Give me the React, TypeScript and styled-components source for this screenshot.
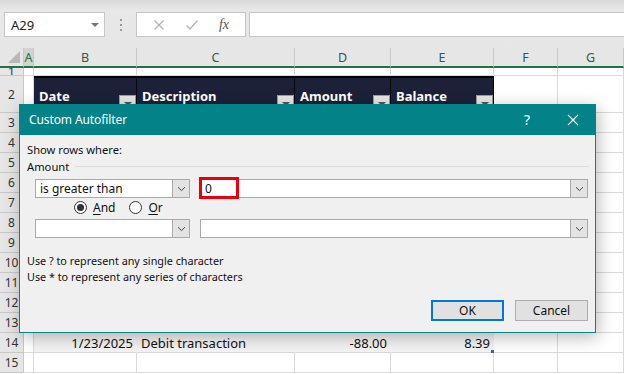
import styled, { createGlobalStyle } from "styled-components";

const GlobalStyle = createGlobalStyle`
  html, body {
    margin: 0;
    padding: 0;
    background: #ffffff;
    overflow: hidden;
  }
  * {
    box-sizing: border-box;
  }
`;

const UI_FONT = `"Noto Sans", "Open Sans", sans-serif`;
const CELL_FONT = `"Noto Sans", "Open Sans", sans-serif`;

const COLUMNS = [
  { key: "A", width: 10 },
  { key: "B", width: 103 },
  { key: "C", width: 158 },
  { key: "D", width: 96 },
  { key: "E", width: 103 },
  { key: "F", width: 64 },
  { key: "G", width: 66 },
];

const HEADERS = ["Date", "Description", "Amount", "Balance"];

const Page = styled.div`
  position: relative;
  width: 624px;
  height: 374px;
  overflow: hidden;
  font-family: ${UI_FONT};
`;

/* ---------- formula bar ---------- */

const FormulaBar = styled.div`
  height: 48px;
  display: flex;
  align-items: flex-start;
  padding: 12px 0 0 4px;
  background: linear-gradient(#d9d9d9 0px, #e8e8e8 10px, #e6e6e6 100%);
`;

const NameBox = styled.div`
  width: 101px;
  height: 25px;
  background: #fff;
  border: 1px solid #c6c6c6;
  display: flex;
  align-items: center;
  justify-content: space-between;
  padding: 0 5px 0 6px;
  font-size: 13px;
  color: #222;
`;

const Caret = styled.span`
  width: 0;
  height: 0;
  border-left: 4px solid transparent;
  border-right: 4px solid transparent;
  border-top: 4px solid #777;
`;

const Grip = styled.div`
  width: 31px;
  height: 25px;
  display: flex;
  flex-direction: column;
  align-items: center;
  justify-content: center;
  gap: 3px;
`;

const GripDot = styled.span`
  width: 2px;
  height: 2px;
  background: #9a9a9a;
`;

const FxBox = styled.div`
  width: 110px;
  height: 25px;
  background: #fff;
  border: 1px solid #c6c6c6;
  display: flex;
  align-items: center;
  justify-content: space-around;
  padding: 0 6px;
`;

const FxLabel = styled.span`
  font-family: "Liberation Serif", serif;
  font-style: italic;
  font-size: 14px;
  color: #555;
`;

const FormulaInput = styled.div`
  flex: 1;
  height: 25px;
  margin-left: 3px;
  background: #fff;
  border: 1px solid #c6c6c6;
  border-right: none;
`;

/* ---------- sheet grid ---------- */

const Sheet = styled.div`
  display: grid;
  grid-template-columns: 24px ${COLUMNS.map((c) => `${c.width}px`).join(" ")};
  grid-template-rows: 20px 8px 37px repeat(13, 20px);
  font-family: ${CELL_FONT};
`;

const Corner = styled.div`
  position: relative;
  background: #e6e6e6;
  border-right: 1px solid #c8c8c8;
  border-bottom: 2px solid #217346;
  &::after {
    content: "";
    position: absolute;
    right: 3px;
    bottom: 3px;
    width: 0;
    height: 0;
    border-left: 12px solid transparent;
    border-bottom: 12px solid #b8b8b8;
  }
`;

const ColHeader = styled.div<{ $active?: boolean }>`
  background: ${(p) => (p.$active ? "#d2d2d2" : "#e6e6e6")};
  border-right: 1px solid #c8c8c8;
  border-bottom: 2px solid #217346;
  display: flex;
  align-items: center;
  justify-content: center;
  font-size: 12.5px;
  color: ${(p) => (p.$active ? "#217346" : "#2e5a4e")};
  overflow: hidden;
`;

const RowHeader = styled.div<{ $tiny?: boolean }>`
  background: #e6e6e6;
  border-right: 1px solid #c8c8c8;
  border-bottom: 1px solid #c8c8c8;
  display: flex;
  align-items: ${(p) => (p.$tiny ? "flex-end" : "center")};
  justify-content: center;
  font-size: 12px;
  line-height: ${(p) => (p.$tiny ? "7px" : "normal")};
  color: #333;
  overflow: hidden;
`;

const Cell = styled.div<{ $shade?: boolean; $align?: "left" | "right" }>`
  background: ${(p) => (p.$shade ? "#f3f3f3" : "#fff")};
  border-right: 1px solid ${(p) => (p.$shade ? "#f3f3f3" : "#dadada")};
  border-bottom: 1px solid #dadada;
  display: flex;
  align-items: center;
  justify-content: ${(p) => (p.$align === "right" ? "flex-end" : "flex-start")};
  padding: 0 3px 0 4px;
  font-size: 13px;
  color: #111;
  white-space: nowrap;
  position: relative;
`;

const HeadCell = styled.div`
  background: #1c2138;
  border-top: 2px solid #000;
  border-right: 1px solid #070912;
  display: flex;
  align-items: center;
  justify-content: space-between;
  padding-left: 5px;
  font-weight: 700;
  font-size: 13px;
  color: #fff;
  white-space: nowrap;
`;

const FilterButton = styled.div`
  align-self: flex-end;
  margin-bottom: 1px;
  width: 17px;
  height: 17px;
  background: #e6e6e6;
  border: 1px solid #9c9c9c;
  display: flex;
  align-items: center;
  justify-content: center;
  &::after {
    content: "";
    border-left: 4px solid transparent;
    border-right: 4px solid transparent;
    border-top: 4px solid #555;
  }
`;

const FillHandle = styled.span`
  position: absolute;
  right: -2px;
  bottom: -2px;
  width: 4px;
  height: 4px;
  background: #4b5bad;
`;

/* ---------- dialog ---------- */

const Dialog = styled.div`
  position: absolute;
  left: 19px;
  top: 104px;
  width: 577px;
  height: 229px;
  border: 1px solid #0a8286;
  border-top: none;
  background: #f0f0f0;
  box-shadow: 2px 4px 16px rgba(0, 0, 0, 0.28);
  display: flex;
  flex-direction: column;
  font-family: ${UI_FONT};
  color: #111;
`;

const TitleBar = styled.div`
  height: 31px;
  margin: 0 -1px;
  background: #038387;
  display: flex;
  align-items: center;
  justify-content: space-between;
  padding: 0 0 0 10px;
  color: #fff;
`;

const TitleText = styled.span`
  font-size: 12px;
  letter-spacing: -0.1px;
`;

const TitleActions = styled.div`
  display: flex;
  align-items: center;
  height: 100%;
`;

const TitleAction = styled.div`
  width: 46px;
  height: 100%;
  display: flex;
  align-items: center;
  justify-content: center;
  font-size: 14px;
`;

const Body = styled.div`
  flex: 1;
  display: flex;
  flex-direction: column;
  padding: 7px 7px 0 7px;
  font-size: 11.2px;
`;

const Line = styled.div`
  height: 16px;
  line-height: 16px;
  white-space: nowrap;
`;

const Hint = styled(Line)`
  font-size: 10.8px;
`;

const GroupHeading = styled.div`
  height: 16px;
  display: flex;
  align-items: center;
  gap: 6px;
  &::after {
    content: "";
    flex: 1;
    height: 1px;
    margin-right: -1px;
    background: #dcdcdc;
  }
`;

const CriteriaRow = styled.div<{ $gap: number }>`
  display: flex;
  gap: 10px;
  margin: ${(p) => p.$gap}px 0 0 8px;
`;

const Combo = styled.div<{ $width?: number }>`
  position: relative;
  ${(p) => (p.$width ? `width: ${p.$width}px;` : "flex: 1;")}
  height: 19px;
  background: #fff;
  border: 1px solid #a9a9a9;
  display: flex;
  align-items: stretch;
`;

const ComboText = styled.div`
  flex: 1;
  display: flex;
  align-items: center;
  padding-left: 4px;
  font-size: 12px;
`;

const ComboButton = styled.div`
  width: 17px;
  background: #e3e3e3;
  border-left: 1px solid #a9a9a9;
  display: flex;
  align-items: center;
  justify-content: center;
`;

const Highlight = styled.div`
  position: absolute;
  left: -2px;
  top: -3px;
  width: 40px;
  height: 22px;
  border: 3px solid #e8000b;
`;

const RadioRow = styled.div`
  height: 19px;
  display: flex;
  align-items: center;
  margin-left: 47px;
  gap: 6px;
`;

const Radio = styled.span<{ $checked?: boolean }>`
  width: 13px;
  height: 13px;
  border-radius: 50%;
  border: 1px solid #333;
  background: #fff;
  display: flex;
  align-items: center;
  justify-content: center;
  &::after {
    content: "";
    width: 7px;
    height: 7px;
    border-radius: 50%;
    background: ${(p) => (p.$checked ? "#333" : "transparent")};
  }
`;

const RadioLabel = styled.span`
  font-size: 12px;
  margin-right: 8px;
  & u {
    text-decoration-thickness: 1px;
    text-underline-offset: 2px;
  }
`;

const Hints = styled.div`
  margin-top: 15px;
  display: flex;
  flex-direction: column;
`;

const Footer = styled.div`
  display: flex;
  justify-content: flex-end;
  gap: 11px;
  margin-top: 15px;
`;

const DialogButton = styled.div<{ $primary?: boolean }>`
  width: 73px;
  height: 21px;
  background: #e1e1e1;
  border: ${(p) => (p.$primary ? "2px solid #0078d7" : "1px solid #adadad")};
  display: flex;
  align-items: center;
  justify-content: center;
  font-size: 12px;
  color: #111;
`;

function Chevron() {
  return (
    <svg width="9" height="6" viewBox="0 0 9 6">
      <path d="M1 1.2 L4.5 4.6 L8 1.2" fill="none" stroke="#444" strokeWidth="1" />
    </svg>
  );
}

function CloseIcon() {
  return (
    <svg width="12" height="12" viewBox="0 0 12 12">
      <path d="M1 1 L11 11 M11 1 L1 11" stroke="#fff" strokeWidth="1.1" />
    </svg>
  );
}

function CancelGlyph() {
  return (
    <svg width="12" height="12" viewBox="0 0 12 12">
      <path d="M1.5 1.5 L10.5 10.5 M10.5 1.5 L1.5 10.5" stroke="#b4b4b4" strokeWidth="1.4" />
    </svg>
  );
}

function CheckGlyph() {
  return (
    <svg width="14" height="12" viewBox="0 0 14 12">
      <path d="M1.5 6.5 L5 10 L12.5 1.5" fill="none" stroke="#b4b4b4" strokeWidth="1.5" />
    </svg>
  );
}

function SheetRow({ row }: { row: number }) {
  if (row === 2) {
    return (
      <>
        <RowHeader>2</RowHeader>
        <Cell />
        {HEADERS.map((h) => (
          <HeadCell key={h}>
            {h}
            <FilterButton />
          </HeadCell>
        ))}
        <Cell />
        <Cell />
      </>
    );
  }
  if (row === 14) {
    return (
      <>
        <RowHeader>14</RowHeader>
        <Cell />
        <Cell $shade $align="right">1/23/2025</Cell>
        <Cell $shade>Debit transaction</Cell>
        <Cell $shade $align="right">-88.00</Cell>
        <Cell $shade $align="right">
          8.39
          <FillHandle />
        </Cell>
        <Cell />
        <Cell />
      </>
    );
  }
  return (
    <>
      <RowHeader $tiny={row === 1}>{row}</RowHeader>
      {COLUMNS.map((c) => (
        <Cell key={c.key} />
      ))}
    </>
  );
}

export default function App() {
  const rows = Array.from({ length: 15 }, (_, i) => i + 1);
  return (
    <>
      <GlobalStyle />
      <Page>
        <FormulaBar>
          <NameBox>
            A29
            <Caret />
          </NameBox>
          <Grip>
            <GripDot />
            <GripDot />
            <GripDot />
          </Grip>
          <FxBox>
            <CancelGlyph />
            <CheckGlyph />
            <FxLabel>fx</FxLabel>
          </FxBox>
          <FormulaInput />
        </FormulaBar>

        <Sheet>
          <Corner />
          {COLUMNS.map((c) => (
            <ColHeader key={c.key} $active={c.key === "A"}>
              {c.key}
            </ColHeader>
          ))}
          {rows.map((r) => (
            <SheetRow key={r} row={r} />
          ))}
        </Sheet>

        <Dialog>
          <TitleBar>
            <TitleText>Custom Autofilter</TitleText>
            <TitleActions>
              <TitleAction>?</TitleAction>
              <TitleAction>
                <CloseIcon />
              </TitleAction>
            </TitleActions>
          </TitleBar>
          <Body>
            <Line>Show rows where:</Line>
            <GroupHeading>Amount</GroupHeading>
            <CriteriaRow $gap={5}>
              <Combo $width={155}>
                <ComboText>is greater than</ComboText>
                <ComboButton>
                  <Chevron />
                </ComboButton>
              </Combo>
              <Combo>
                <ComboText>0</ComboText>
                <ComboButton>
                  <Chevron />
                </ComboButton>
                <Highlight />
              </Combo>
            </CriteriaRow>
            <RadioRow>
              <Radio $checked />
              <RadioLabel>
                <u>A</u>nd
              </RadioLabel>
              <Radio />
              <RadioLabel>
                <u>O</u>r
              </RadioLabel>
            </RadioRow>
            <CriteriaRow $gap={2}>
              <Combo $width={155}>
                <ComboText />
                <ComboButton>
                  <Chevron />
                </ComboButton>
              </Combo>
              <Combo>
                <ComboText />
                <ComboButton>
                  <Chevron />
                </ComboButton>
              </Combo>
            </CriteriaRow>
            <Hints>
              <Hint>Use ? to represent any single character</Hint>
              <Hint>Use * to represent any series of characters</Hint>
            </Hints>
            <Footer>
              <DialogButton $primary>OK</DialogButton>
              <DialogButton>Cancel</DialogButton>
            </Footer>
          </Body>
        </Dialog>
      </Page>
    </>
  );
}
